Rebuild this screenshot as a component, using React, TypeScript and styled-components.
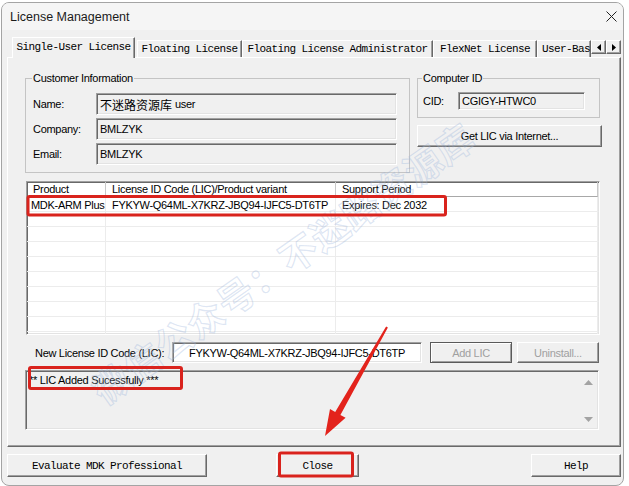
import React from "react";
import styled, { createGlobalStyle, css } from "styled-components";

const sans = `"Liberation Sans", "Noto Sans CJK SC", Arial, sans-serif`;
const mono = `"Liberation Mono", "Courier New", monospace`;

const GlobalStyle = createGlobalStyle`
  html, body {
    margin: 0;
    padding: 0;
    background: #ffffff;
  }
  body {
    font-family: ${sans};
  }
`;

const raised = css`
  border-top: 1px solid #ffffff;
  border-left: 1px solid #ffffff;
  border-right: 1px solid #696969;
  border-bottom: 1px solid #696969;
  box-shadow: inset -1px -1px #a0a0a0;
`;

const sunken = css`
  border-top: 1px solid #a0a0a0;
  border-left: 1px solid #a0a0a0;
  border-right: 1px solid #ffffff;
  border-bottom: 1px solid #ffffff;
  box-shadow: inset 1px 1px #696969, inset -1px -1px #e3e3e3;
`;

const uiText = css`
  font-family: ${sans};
  font-size: 11px;
  letter-spacing: -0.3px;
  color: #000;
`;

const monoText = css`
  font-family: ${mono};
  font-size: 11px;
  letter-spacing: -0.6px;
  color: #000;
`;

const Page = styled.div`
  position: relative;
  box-sizing: border-box;
  width: 629px;
  height: 486px;
  padding: 2px 0 0 1px;
  overflow: hidden;
`;

const Window = styled.div`
  box-sizing: border-box;
  width: 623px;
  height: 484px;
  border: 1px solid #a4a4a4;
  border-radius: 8px;
  background: #f0f0f0;
  overflow: hidden;
  display: flex;
  flex-direction: column;
`;

const TitleBar = styled.div`
  height: 27px;
  flex-shrink: 0;
  display: flex;
  align-items: center;
  justify-content: space-between;
  padding: 0 6px 0 8px;
  background: #f5f5f5;
  font-family: ${sans};
  font-size: 12.5px;
  color: #1b1b1b;
`;

const Body = styled.div`
  padding: 7px 2px 0 5px;
  display: flex;
  flex-direction: column;
`;

const TabStrip = styled.div`
  position: relative;
  z-index: 1;
  height: 21px;
  margin-bottom: -1px;
  padding-left: 5px;
  display: flex;
  align-items: flex-end;
`;

const Tab = styled.div<{ $w: number; $active?: boolean; $clip?: boolean }>`
  box-sizing: border-box;
  width: ${(p) => p.$w}px;
  height: ${(p) => (p.$active ? 21 : 17)}px;
  margin-bottom: ${(p) => (p.$active ? 0 : 1)}px;
  margin-right: ${(p) => (p.$active ? 2 : 0)}px;
  border-top: 1px solid #ffffff;
  border-left: 1px solid #ffffff;
  border-right: 1px solid #696969;
  box-shadow: inset -1px 0 #a0a0a0;
  background: #f0f0f0;
  display: flex;
  align-items: center;
  justify-content: ${(p) => (p.$clip ? "flex-start" : "center")};
  padding: ${(p) => (p.$clip ? "0 0 0 4px" : "0")};
  padding-bottom: ${(p) => (p.$active ? 2 : 0)}px;
  white-space: nowrap;
  overflow: hidden;
  ${monoText};
`;

const ScrollPair = styled.div`
  display: flex;
  margin-bottom: 4px;
`;

const SmallArrow = styled.div`
  box-sizing: border-box;
  width: 15px;
  height: 14px;
  background: #f0f0f0;
  ${raised};
  display: flex;
  align-items: center;
  justify-content: center;
`;

const Panel = styled.div`
  box-sizing: border-box;
  border-top: 1px solid #ffffff;
  border-left: 1px solid #ffffff;
  border-right: 1px solid #696969;
  border-bottom: 1px solid #696969;
  box-shadow: inset -1px -1px #a0a0a0;
  padding: 14px 20px 16px 17px;
  display: flex;
  flex-direction: column;
`;

const TopGrid = styled.div`
  display: grid;
  grid-template-columns: 385px 185px;
  column-gap: 7px;
  align-items: start;
`;

const Group = styled.fieldset<{ $pad: string; $w?: number }>`
  box-sizing: border-box;
  margin: 0;
  min-width: 0;
  width: ${(p) => (p.$w ? `${p.$w}px` : "auto")};
  padding: ${(p) => p.$pad};
  border: 1px solid #c4c4c4;
`;

const Legend = styled.legend`
  padding: 0 1px;
  margin-left: -1px;
  line-height: 13px;
  ${uiText};
`;

const FormGrid = styled.div<{ $label: number; $gap: number }>`
  display: grid;
  grid-template-columns: ${(p) => p.$label}px 1fr;
  row-gap: ${(p) => p.$gap}px;
  align-items: center;
`;

const Label = styled.div<{ $w?: number }>`
  ${uiText};
  white-space: nowrap;
  ${(p) => p.$w && `width: ${p.$w}px;`}
`;

const Field = styled.div<{ $h: number; $w?: number; $white?: boolean; $center?: boolean }>`
  box-sizing: border-box;
  height: ${(p) => p.$h}px;
  ${(p) => p.$w && `width: ${p.$w}px;`}
  background: ${(p) => (p.$white ? "#ffffff" : "#f0f0f0")};
  ${sunken};
  display: flex;
  align-items: center;
  justify-content: ${(p) => (p.$center ? "center" : "flex-start")};
  padding: 0 3px;
  white-space: nowrap;
  overflow: hidden;
  ${uiText};
`;

const Cjk = styled.span`
  font-size: 12px;
  letter-spacing: 0;
  margin-right: 3px;
`;

const Button = styled.button<{
  $w: number;
  $h: number;
  $mono?: boolean;
  $off?: boolean;
  $def?: boolean;
  $gap?: number | "auto";
}>`
  box-sizing: border-box;
  width: ${(p) => p.$w}px;
  height: ${(p) => p.$h}px;
  margin: 0;
  margin-left: ${(p) => (p.$gap === "auto" ? "auto" : `${p.$gap ?? 0}px`)};
  padding: 0;
  background: #f0f0f0;
  ${raised};
  ${(p) => (p.$mono ? monoText : uiText)};
  color: ${(p) => (p.$off ? "#a0a0a0" : "#000")};
  ${(p) =>
    p.$def &&
    css`
      border: 1px solid #5a5a5a;
      box-shadow: inset 1px 1px #ffffff, inset -1px -1px #a0a0a0;
    `}
`;

const RightColumn = styled.div`
  display: flex;
  flex-direction: column;
  gap: 7px;
`;

const List = styled.div`
  box-sizing: border-box;
  margin: 8px 0 0 1px;
  width: 574px;
  height: 154px;
  background: #ffffff;
  ${sunken};
  overflow: hidden;
`;

const cols = "79px 230px 262px 1fr";

const HeadRow = styled.div`
  display: grid;
  grid-template-columns: ${cols};
  height: 15px;
`;

const HeadCell = styled.div<{ $last?: boolean }>`
  box-sizing: border-box;
  border-bottom: 1px solid ${(p) => (p.$last ? "transparent" : "#a8a8a8")};
  border-right: 1px solid ${(p) => (p.$last ? "transparent" : "#c8c8c8")};
  padding-left: 6px;
  line-height: 14px;
  white-space: nowrap;
  overflow: hidden;
  ${uiText};
`;

const Row = styled.div`
  display: grid;
  grid-template-columns: ${cols};
  height: 15px;
`;

const Cell = styled.div<{ $pad: number; $last?: boolean }>`
  box-sizing: border-box;
  border-bottom: 1px solid #ececec;
  border-right: 1px solid ${(p) => (p.$last ? "transparent" : "#ececec")};
  padding-left: ${(p) => p.$pad}px;
  line-height: 16px;
  white-space: nowrap;
  overflow: hidden;
  ${uiText};
`;

const LicRow = styled.div`
  margin-top: 7px;
  padding-left: 10px;
  height: 21px;
  display: flex;
  align-items: center;
`;

const Output = styled.div`
  box-sizing: border-box;
  margin-top: 7px;
  width: 574px;
  height: 60px;
  ${sunken};
  background: #f0f0f0;
  display: flex;
`;

const OutputText = styled.div`
  flex: 1;
  padding: 3px 3px;
  line-height: 13px;
  ${uiText};
`;

const ScrollCol = styled.div`
  width: 17px;
  display: flex;
  flex-direction: column;
  justify-content: space-between;
  align-items: center;
  padding: 9px 0 7px;
  margin-right: 1px;
`;

const Footer = styled.div`
  margin-top: 7px;
  display: flex;
`;

const Watermark = styled.div`
  position: absolute;
  left: 282px;
  top: 262px;
  transform: translate(-50%, -50%) rotate(-35deg);
  font-family: "Noto Sans CJK SC", sans-serif;
  font-weight: 700;
  font-size: 37px;
  letter-spacing: 1px;
  white-space: nowrap;
  color: rgba(255, 255, 255, 0.12);
  -webkit-text-stroke: 1.2px rgba(150, 176, 218, 0.32);
  pointer-events: none;
`;

const Marks = styled.svg`
  position: absolute;
  left: 0;
  top: 0;
  pointer-events: none;
`;

const rows = Array.from({ length: 10 }, (_, i) => i);

export default function App() {
  return (
    <Page>
      <GlobalStyle />
      <Window>
        <TitleBar>
          <span>License Management</span>
          <svg width="11" height="11" viewBox="0 0 11 11">
            <path d="M0.5 0.5 L10.5 10.5 M10.5 0.5 L0.5 10.5" stroke="#222" strokeWidth="1" />
          </svg>
        </TitleBar>
        <Body>
          <TabStrip>
            <Tab $w={123} $active>Single-User License</Tab>
            <Tab $w={105}>Floating License</Tab>
            <Tab $w={191}>Floating License Administrator</Tab>
            <Tab $w={104}>FlexNet License</Tab>
            <Tab $w={54} $clip>User-Bas</Tab>
            <ScrollPair>
              <SmallArrow>
                <svg width="4" height="7" viewBox="0 0 4 7">
                  <path d="M4 0 L0 3.5 L4 7 Z" fill="#000" />
                </svg>
              </SmallArrow>
              <SmallArrow>
                <svg width="4" height="7" viewBox="0 0 4 7">
                  <path d="M0 0 L4 3.5 L0 7 Z" fill="#000" />
                </svg>
              </SmallArrow>
            </ScrollPair>
          </TabStrip>
          <Panel>
            <TopGrid>
              <Group $pad="8px 12px 7px 7px">
                <Legend>Customer Information</Legend>
                <FormGrid $label={63} $gap={3}>
                  <Label>Name:</Label>
                  <Field $h={22}>
                    <Cjk>不迷路资源库</Cjk>user
                  </Field>
                  <Label>Company:</Label>
                  <Field $h={22}>BMLZYK</Field>
                  <Label>Email:</Label>
                  <Field $h={22}>BMLZYK</Field>
                </FormGrid>
              </Group>
              <RightColumn>
                <Group $pad="7px 14px 7px 5px" $w={183}>
                  <Legend>Computer ID</Legend>
                  <FormGrid $label={35} $gap={0}>
                    <Label>CID:</Label>
                    <Field $h={18}>CGIGY-HTWC0</Field>
                  </FormGrid>
                </Group>
                <Button $w={185} $h={22}>Get LIC via Internet...</Button>
              </RightColumn>
            </TopGrid>

            <List>
              <HeadRow>
                <HeadCell>Product</HeadCell>
                <HeadCell>License ID Code (LIC)/Product variant</HeadCell>
                <HeadCell>Support Period</HeadCell>
                <HeadCell $last />
              </HeadRow>
              {rows.map((i) => (
                <Row key={i}>
                  <Cell $pad={4}>{i === 0 ? "MDK-ARM Plus" : ""}</Cell>
                  <Cell $pad={6}>{i === 0 ? "FYKYW-Q64ML-X7KRZ-JBQ94-IJFC5-DT6TP" : ""}</Cell>
                  <Cell $pad={6}>{i === 0 ? "Expires: Dec 2032" : ""}</Cell>
                  <Cell $pad={0} $last />
                </Row>
              ))}
            </List>

            <LicRow>
              <Label $w={137}>New License ID Code (LIC):</Label>
              <Field $h={21} $w={250} $white $center>
                FYKYW-Q64ML-X7KRZ-JBQ94-IJFC5-DT6TP
              </Field>
              <Button $w={82} $h={21} $off $def $gap={8}>
                Add LIC
              </Button>
              <Button $w={82} $h={21} $off $gap={5}>
                Uninstall...
              </Button>
            </LicRow>

            <Output>
              <OutputText>** LIC Added Sucessfully ***</OutputText>
              <ScrollCol>
                <svg width="9" height="5" viewBox="0 0 9 5">
                  <path d="M0 5 L4.5 0 L9 5 Z" fill="#a3a3a3" />
                </svg>
                <svg width="9" height="5" viewBox="0 0 9 5">
                  <path d="M0 0 L4.5 5 L9 0 Z" fill="#a3a3a3" />
                </svg>
              </ScrollCol>
            </Output>
          </Panel>

          <Footer>
            <Button $w={200} $h={23} $mono>Evaluate MDK Professional</Button>
            <Button $w={83} $h={23} $mono $gap={69}>Close</Button>
            <Button $w={90} $h={23} $mono $gap="auto">Help</Button>
          </Footer>
        </Body>
      </Window>

      <Watermark>微信公众号：不迷路资源库</Watermark>

      <Marks width="629" height="486" viewBox="0 0 629 486">
        <g fill="none" stroke="#d9231d" strokeWidth="3">
          <rect x="28" y="196.5" width="417.5" height="18.5" rx="1.5" />
          <rect x="29.5" y="367.5" width="152" height="21" rx="1.5" />
          <rect x="279.5" y="453" width="73" height="23" rx="1.5" />
        </g>
        <polygon
          points="386.1,326.5 387.9,327.5 340.4,414.9 345.6,417.8 325,436 330,409 335.2,411.9"
          fill="#e3231c"
        />
      </Marks>
    </Page>
  );
}
